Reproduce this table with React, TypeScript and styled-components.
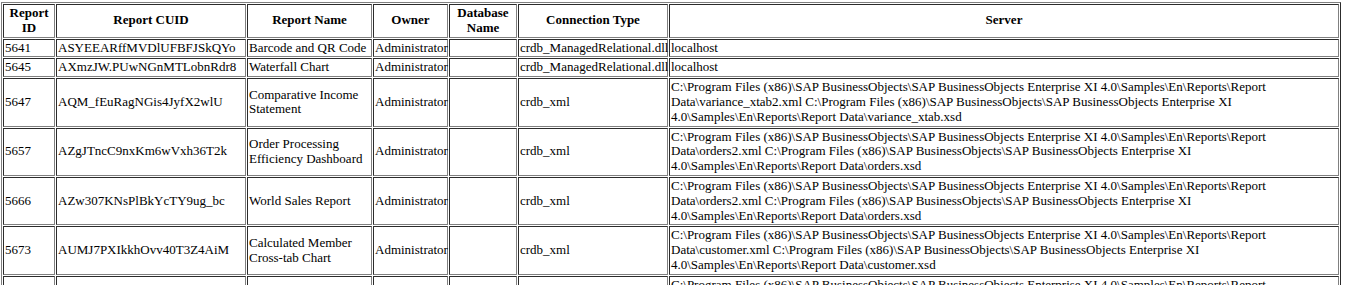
import styled, { createGlobalStyle } from "styled-components";

const GlobalStyle = createGlobalStyle`
  body {
    margin: 2px 0 0 1px;
    background: #ffffff;
    font-family: "Liberation Serif", "Times New Roman", serif;
    font-size: 13px;
    color: #000000;
  }
  ::-webkit-scrollbar {
    width: 10px;
  }
  ::-webkit-scrollbar-track {
    background: #f1f1f1;
  }
  ::-webkit-scrollbar-thumb {
    background: #c1c1c1;
    border-left: 2px solid #f1f1f1;
  }
  ::-webkit-scrollbar-button:single-button:vertical:decrement {
    display: block;
    height: 13px;
    background: #f1f1f1;
  }
  ::-webkit-scrollbar-button:single-button:vertical:increment {
    display: block;
    height: 13px;
    background: #f1f1f1;
  }
`;

const Table = styled.table`
  width: 1340px;
  table-layout: fixed;
  border-collapse: separate;
  border-spacing: 1px;
  border: 1px outset gray;
  line-height: 14.8px;
`;

const HeadCell = styled.th<{ $width?: number }>`
  box-sizing: border-box;
  width: ${(props) => (props.$width ? `${props.$width}px` : "auto")};
  padding: 1px;
  border: 1px inset gray;
  font-weight: bold;
  text-align: center;
  vertical-align: middle;
`;

const Cell = styled.td`
  padding: 1px;
  border: 1px inset gray;
  text-align: left;
  vertical-align: middle;
`;

const SAP_PATH =
  "C:\\Program Files (x86)\\SAP BusinessObjects\\SAP BusinessObjects Enterprise XI 4.0\\Samples\\En\\Reports\\Report Data\\";

const xmlServer = (xml: string, xsd: string) =>
  `${SAP_PATH}${xml} ${SAP_PATH}${xsd}`;

const columns = [
  { title: "Report ID", width: 52 },
  { title: "Report CUID", width: 190 },
  { title: "Report Name", width: 125 },
  { title: "Owner", width: 75 },
  { title: "Database Name", width: 68 },
  { title: "Connection Type", width: 150 },
  { title: "Server" },
];

const reports = [
  {
    id: "5641",
    cuid: "ASYEEARffMVDlUFBFJSkQYo",
    name: "Barcode and QR Code",
    connection: "crdb_ManagedRelational.dll",
    server: "localhost",
  },
  {
    id: "5645",
    cuid: "AXmzJW.PUwNGnMTLobnRdr8",
    name: "Waterfall Chart",
    connection: "crdb_ManagedRelational.dll",
    server: "localhost",
  },
  {
    id: "5647",
    cuid: "AQM_fEuRagNGis4JyfX2wlU",
    name: "Comparative Income Statement",
    connection: "crdb_xml",
    server: xmlServer("variance_xtab2.xml", "variance_xtab.xsd"),
  },
  {
    id: "5657",
    cuid: "AZgJTncC9nxKm6wVxh36T2k",
    name: "Order Processing Efficiency Dashboard",
    connection: "crdb_xml",
    server: xmlServer("orders2.xml", "orders.xsd"),
  },
  {
    id: "5666",
    cuid: "AZw307KNsPlBkYcTY9ug_bc",
    name: "World Sales Report",
    connection: "crdb_xml",
    server: xmlServer("orders2.xml", "orders.xsd"),
  },
  {
    id: "5673",
    cuid: "AUMJ7PXIkkhOvv40T3Z4AiM",
    name: "Calculated Member Cross-tab Chart",
    connection: "crdb_xml",
    server: xmlServer("customer.xml", "customer.xsd"),
  },
  {
    id: "5680",
    cuid: "AeQ5kTvBnFhLp2Wq8RmXc0s",
    name: "Sales Trend Analysis",
    connection: "crdb_xml",
    server: xmlServer("orders2.xml", "orders.xsd"),
  },
];

function App() {
  return (
    <>
      <GlobalStyle />
      <Table>
        <thead>
          <tr>
            {columns.map((col) => (
              <HeadCell key={col.title} $width={col.width}>
                {col.title}
              </HeadCell>
            ))}
          </tr>
        </thead>
        <tbody>
          {reports.map((report) => (
            <tr key={report.id}>
              <Cell>{report.id}</Cell>
              <Cell>{report.cuid}</Cell>
              <Cell>{report.name}</Cell>
              <Cell>Administrator</Cell>
              <Cell></Cell>
              <Cell>{report.connection}</Cell>
              <Cell>{report.server}</Cell>
            </tr>
          ))}
        </tbody>
      </Table>
    </>
  );
}

export default App;
